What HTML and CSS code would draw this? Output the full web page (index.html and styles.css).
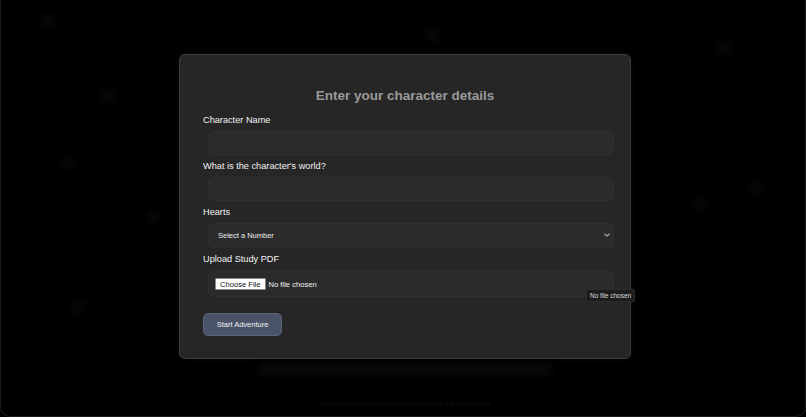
FILE: index.html
```html
<!DOCTYPE html>
<html lang="en">
<head>
    <meta charset="UTF-8">
    <meta name="viewport" content="width=device-width, initial-scale=1.0">
    <title>Character Details</title>
    <link rel="stylesheet" href="styles.css">
</head>
<body>

<div class="screen">
    <!-- faint floating specks behind the form -->
    <div class="speck" style="left: 40px; top: 14px;"></div>
    <div class="speck" style="left: 100px; top: 90px;"></div>
    <div class="speck" style="left: 425px; top: 28px;"></div>
    <div class="speck" style="left: 716px; top: 40px;"></div>
    <div class="speck" style="left: 692px; top: 198px;"></div>
    <div class="speck" style="left: 145px; top: 210px;"></div>
    <div class="speck" style="left: 60px; top: 155px;"></div>
    <div class="speck" style="left: 70px; top: 300px;"></div>
    <div class="speck" style="left: 748px; top: 182px;"></div>

    <form class="card" onsubmit="return false;">
        <h2>Enter your character details</h2>

        <label for="char-name">Character Name</label>
        <input type="text" id="char-name" class="field">

        <label for="char-world">What is the character's world?</label>
        <input type="text" id="char-world" class="field">

        <label for="hearts">Hearts</label>
        <div class="select-wrap">
            <select id="hearts" class="field">
                <option>Select a Number</option>
                <option>1</option>
                <option>2</option>
                <option>3</option>
                <option>4</option>
                <option>5</option>
            </select>
            <svg class="chevron" width="8" height="8" viewBox="0 0 8 8">
                <path d="M1.8 3 L4 5.1 L6.2 3" fill="none" stroke="#aaa" stroke-width="1.1" stroke-linecap="round" stroke-linejoin="round"/>
            </svg>
        </div>

        <label for="study-pdf">Upload Study PDF</label>
        <div class="file-wrap">
            <input type="file" id="study-pdf" class="field file-field" accept=".pdf">
            <span class="tooltip">No file chosen</span>
        </div>

        <button type="submit" class="start-btn">Start Adventure</button>
    </form>

    <div class="below-bar"></div>
    <div class="footer-note">Your adventure begins when you submit the form above</div>
</div>

</body>
</html>
```

FILE: styles.css
```css
html, body {
    margin: 0;
    padding: 0;
    background: #000;
}
body {
    font-family: "Liberation Sans", Arial, sans-serif;
    color: #fff;
}
.screen {
    position: relative;
    height: 416px;
    padding-left: 4px;
    border: 1px solid #1c1c1c;
    border-top: none;
    border-radius: 0 0 10px 10px;
    display: flex;
    flex-direction: column;
    align-items: center;
    overflow: hidden;
}
.speck {
    position: absolute;
    width: 14px;
    height: 14px;
    border-radius: 50%;
    background: #070707;
    filter: blur(3px);
}
.card {
    position: relative;
    width: 404px;
    margin-top: 54px;
    padding: 24px 23px 22px 23px;
    background: #262626;
    border: 1px solid #3d3d3d;
    border-radius: 6px;
    box-shadow: 0 0 6px rgba(255, 255, 255, 0.04);
}
h2 {
    margin: 8px 0 9px;
    text-align: center;
    font-size: 13.5px;
    line-height: 18px;
    font-weight: bold;
    color: #9a9a9a;
}
label {
    display: block;
    font-size: 9.2px;
    line-height: 12px;
    margin-bottom: 5px;
    color: #f2f2f2;
}
.field {
    display: block;
    box-sizing: border-box;
    width: 406px;
    height: 24px;
    margin: 0 0 5px 5px;
    padding: 0 9px;
    background: #2b2b2b;
    border: 1px solid #2f2f2f;
    border-radius: 6px;
    color: #eee;
    font-family: "Liberation Sans", Arial, sans-serif;
    font-size: 7.5px;
    outline: none;
}
.select-wrap {
    position: relative;
}
select.field {
    height: 25px;
    appearance: none;
    -webkit-appearance: none;
}
.chevron {
    position: absolute;
    left: 400px;
    top: 8px;
}
.file-wrap {
    position: relative;
}
.file-field {
    height: 27px;
    padding: 7px 6px 0;
    font-size: 7.6px;
    color: #f2f2f2;
}
.file-field::file-selector-button {
    font-family: "Liberation Sans", Arial, sans-serif;
    font-size: 7.6px;
    height: 12px;
    padding: 0 4px;
    margin-right: 3px;
    background: #fff;
    color: #111;
    border: 1px solid #8a8a8a;
    border-radius: 1px;
}
.tooltip {
    position: absolute;
    left: 383px;
    top: 19px;
    padding: 1px 3px;
    background: #1c1c1c;
    border: 1px solid #2c2c2c;
    border-radius: 2px;
    font-size: 6.5px;
    line-height: 9px;
    color: #ddd;
    white-space: nowrap;
}
.start-btn {
    display: block;
    margin-top: 16px;
    width: 79px;
    height: 23px;
    background: #4a5468;
    border: 1px solid #5a6478;
    border-radius: 5px;
    color: #f2f2f2;
    font-family: "Liberation Sans", Arial, sans-serif;
    font-size: 7.5px;
    cursor: pointer;
}
.below-bar {
    width: 294px;
    height: 13px;
    margin-top: 4px;
    background: #070707;
    filter: blur(2px);
}
.footer-note {
    margin-top: 24px;
    font-size: 7px;
    color: #0d0d0d;
}
```
